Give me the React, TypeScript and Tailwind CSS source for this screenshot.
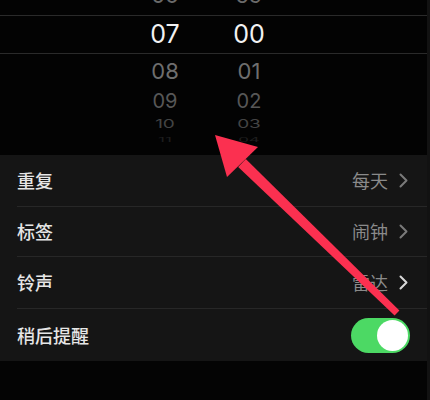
import React from "react";

const numFont = { fontFamily: "Inter, 'Liberation Sans', sans-serif" };

function Chevron({ color }: { color: string }) {
  return (
    <svg width="9" height="15" viewBox="0 0 9 15" className="shrink-0">
      <path d="M1.5 1.5 L7.5 7.5 L1.5 13.5" fill="none" stroke={color} strokeWidth="2" strokeLinecap="round" strokeLinejoin="round" />
    </svg>
  );
}

function PickerRow({ h, a, b, cls, extra }: { h: string; a: string; b: string; cls: string; extra?: string }) {
  return (
    <div className={`flex items-center pl-[130px] gap-[14px] ${h} ${extra ?? ""}`}>
      <div className={`w-[70px] text-center ${cls}`}>{a}</div>
      <div className={`w-[70px] text-center ${cls}`}>{b}</div>
    </div>
  );
}

function Row({ label, value, chevron, h, last, toggle }: { label: string; value?: string; chevron?: string; h: string; last?: boolean; toggle?: boolean }) {
  return (
    <div className={`pl-[17px] ${h} flex`}>
      <div className={`flex-1 flex items-center justify-between ${last ? "" : "border-b border-[#272727]"} ${toggle ? "pr-[17px]" : "pr-[19px]"}`}>
        <span className="text-[18px] font-medium text-[#e6e6e6]">{label}</span>
        {toggle ? (
          <div className="w-[59px] h-[35px] rounded-full bg-[#4cd964] flex items-center justify-end p-[2px]">
            <div className="w-[31px] h-[31px] rounded-full bg-white" />
          </div>
        ) : (
          <div className="flex items-center gap-[11px]">
            <span className="text-[18px] text-[#8a8a8a]">{value}</span>
            <Chevron color={chevron ?? "#7a7a7a"} />
          </div>
        )}
      </div>
    </div>
  );
}

export default function App() {
  return (
    <div
      className="relative w-[430px] h-[400px] overflow-hidden bg-[#040404] flex"
      style={{ fontFamily: "'Noto Sans CJK SC', 'Noto Sans', sans-serif" }}
    >
      <div className="w-[427px] flex flex-col">
        <div className="h-[155px] overflow-hidden bg-[#030303]" style={numFont}>
          <PickerRow h="h-[39px]" extra="-mt-[24px]" a="06" b="59" cls="text-[22px] text-[#6a6a6a]" />
          <div className="border-y border-[#2a2a2a]">
            <PickerRow h="h-[37px]" a="07" b="00" cls="text-[25px] text-[#f2f2f2]" />
          </div>
          <PickerRow h="h-[34px]" a="08" b="01" cls="text-[22px] text-[#6e6e6e]" />
          <PickerRow h="h-[26px]" a="09" b="02" cls="text-[20px] text-[#575757]" />
          <PickerRow h="h-[20px]" a="10" b="03" cls="text-[19px] text-[#444444] scale-y-[0.6]" />
          <PickerRow h="h-[12px]" a="11" b="04" cls="text-[17px] text-[#1e1e1e] scale-y-[0.35]" />
        </div>
        <div className="bg-[#151515] flex flex-col">
          <Row label="重复" value="每天" h="h-[52px]" />
          <Row label="标签" value="闹钟" h="h-[50px]" />
          <Row label="铃声" value="雷达" chevron="#d8d8d8" h="h-[52px]" />
          <Row label="稍后提醒" toggle last h="h-[52px]" />
        </div>
        <div className="flex-1 bg-[#040404]" />
      </div>
      <div className="w-[3px] bg-[#121212]" />
      <svg className="absolute inset-0 pointer-events-none" width="430" height="400" viewBox="0 0 430 400">
        <polygon points="245.8,159 399.4,310.5 394.6,315.5 238.2,167" fill="#fb3050" />
        <polygon points="215,135 258,147 227,177" fill="#fb3050" />
      </svg>
    </div>
  );
}
